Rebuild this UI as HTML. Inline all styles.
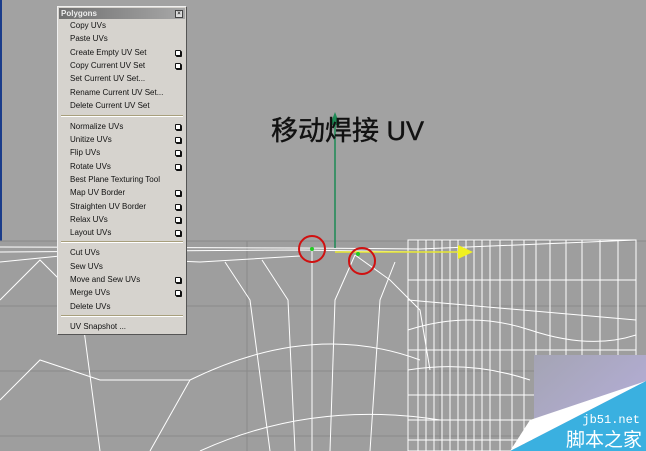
<!DOCTYPE html><html><head><style>
body{margin:0;width:646px;height:451px;overflow:hidden;background:#a2a2a2;position:relative;font-family:"Liberation Sans",sans-serif}
.m{position:absolute;left:57px;top:6px;width:128px;height:327px;background:#d6d3ce;border:1px solid #f0f0f0;border-right-color:#555;border-bottom-color:#555}
.t{position:absolute;left:1px;top:1px;width:126px;height:11px;background:linear-gradient(90deg,#707070,#a8a8a8);color:#eee;font-size:8px;font-weight:bold;line-height:11px;padding-left:2px;box-sizing:border-box}
.x{position:absolute;right:2px;top:2px;width:6px;height:6px;border:1px solid #444;background:#ddd;font-size:6px;line-height:6px;text-align:center;color:#333}
.i{position:absolute;left:12px;font-size:8px;color:#111;line-height:10px;white-space:nowrap}
.b{position:absolute;left:117px;width:4px;height:4px;border:1px solid #111;background:#fff;border-radius:1px;box-shadow:1px 1px 0 #111}
.s{position:absolute;left:3px;width:122px;height:1px;background:#a89f7c;border-bottom:1px solid #fff}
</style></head><body>
<div style="position:absolute;left:0;top:0;width:2px;height:241px;background:#1a3c8a"></div>
<svg width="646" height="451" style="position:absolute;left:0;top:0">
<rect x="0" y="241" width="646" height="210" fill="#9e9e9e"/>
<g stroke="#8a8a8a" stroke-width="1">
<line x1="0" y1="241" x2="646" y2="241"/><line x1="0" y1="306" x2="646" y2="306"/><line x1="0" y1="371" x2="646" y2="371"/><line x1="0" y1="436" x2="646" y2="436"/>
<line x1="247" y1="241" x2="247" y2="451"/><line x1="440" y1="241" x2="440" y2="451"/>
</g>
<g stroke="#fff" stroke-width="1" fill="none">
<path d="M0 247 L300 248 L420 249 L636 240"/><path d="M0 252 L300 250 L420 252"/><path d="M0 262 L60 256 L200 262 L300 256"/>
<path d="M312 250 V451"/><path d="M355 255 L335 300 L330 451"/><path d="M262 260 L288 300 L295 451"/>
<path d="M355 255 L390 280 L420 310 L430 370"/>
<path d="M190 380 Q312 320 420 360"/><path d="M150 451 L190 380"/><path d="M200 451 Q312 400 440 420"/>
<path d="M0 300 L40 260 L80 300 L100 451"/><path d="M0 400 L40 360 L100 380 L190 380"/>
<path d="M225 262 L250 300 L270 451"/><path d="M395 262 L380 300 L370 451"/>
<rect x="408" y="240" width="228" height="211"/>
<path d="M418 240V451M426 240V451M434 240V451M442 240V451M450 240V451M458 240V451M466 240V451M474 240V451M482 240V451M490 240V451M500 240V451M512 240V451M524 240V451M536 240V451M550 240V451M566 240V451M582 240V451M600 240V451M618 240V451"/>
<path d="M408 280H636M408 300L636 320M408 330Q470 310 530 330T636 335M408 350H636M408 370Q470 360 530 380M408 395H540M408 420H540M408 440H540"/>
</g>
<line x1="335" y1="248" x2="335" y2="115" stroke="#1d8a55" stroke-width="1.5"/>
<path d="M330 125 L335 112 L340 125Z" fill="#1d8a55"/>
<line x1="335" y1="252" x2="465" y2="252" stroke="#e8e830" stroke-width="1.5"/>
<path d="M458 245 L473 252 L458 259Z" fill="#f0f020"/>
<circle cx="312" cy="249" r="13" stroke="#d01010" stroke-width="2" fill="none"/>
<circle cx="362" cy="261" r="13" stroke="#d01010" stroke-width="2" fill="none"/>
<circle cx="312" cy="249" r="2" fill="#2c2"/><circle cx="358" cy="254" r="2" fill="#2c2"/>
<defs><linearGradient id="g" x1="0" y1="0" x2="1" y2="1"><stop offset="0" stop-color="#a4a4b4"/><stop offset="1" stop-color="#b8b0e0"/></linearGradient></defs>
<rect x="534" y="355" width="112" height="96" fill="url(#g)"/>
<path d="M510 451 L646 381 L646 451Z" fill="#3ab0e0"/>
<path d="M510 451 L646 381 L530 420Z" fill="#fff"/>
<text x="640" y="423" font-size="12" fill="#fff" text-anchor="end" font-family="Liberation Mono,monospace">jb51.net</text>
<text x="642" y="446" font-size="19" fill="#fff" text-anchor="end" font-family="Noto Sans CJK SC,sans-serif">脚本之家</text>
</svg>
<div style="position:absolute;left:271px;top:114px;font-size:27px;color:#111;font-family:'Liberation Sans','Noto Sans CJK SC',sans-serif;line-height:34px;-webkit-text-stroke:0.4px #111">移动焊接 UV</div>
<div class="m"><div class="t">Polygons<div class="x">×</div></div>
<div class="i" style="top:14px">Copy UVs</div>
<div class="i" style="top:27px">Paste UVs</div>
<div class="i" style="top:41px">Create Empty UV Set</div><div class="b" style="top:43px"></div>
<div class="i" style="top:54px">Copy Current UV Set</div><div class="b" style="top:56px"></div>
<div class="i" style="top:67px">Set Current UV Set...</div>
<div class="i" style="top:81px">Rename Current UV Set...</div>
<div class="i" style="top:94px">Delete Current UV Set</div>
<div class="s" style="top:108px"></div>
<div class="i" style="top:115px">Normalize UVs</div><div class="b" style="top:117px"></div>
<div class="i" style="top:128px">Unitize UVs</div><div class="b" style="top:130px"></div>
<div class="i" style="top:141px">Flip UVs</div><div class="b" style="top:143px"></div>
<div class="i" style="top:155px">Rotate UVs</div><div class="b" style="top:157px"></div>
<div class="i" style="top:168px">Best Plane Texturing Tool</div>
<div class="i" style="top:181px">Map UV Border</div><div class="b" style="top:183px"></div>
<div class="i" style="top:195px">Straighten UV Border</div><div class="b" style="top:197px"></div>
<div class="i" style="top:208px">Relax UVs</div><div class="b" style="top:210px"></div>
<div class="i" style="top:221px">Layout UVs</div><div class="b" style="top:223px"></div>
<div class="s" style="top:234px"></div>
<div class="i" style="top:241px">Cut UVs</div>
<div class="i" style="top:255px">Sew UVs</div>
<div class="i" style="top:268px">Move and Sew UVs</div><div class="b" style="top:270px"></div>
<div class="i" style="top:281px">Merge UVs</div><div class="b" style="top:283px"></div>
<div class="i" style="top:295px">Delete UVs</div>
<div class="s" style="top:308px"></div>
<div class="i" style="top:315px">UV Snapshot ...</div>
</div>
</body></html>
